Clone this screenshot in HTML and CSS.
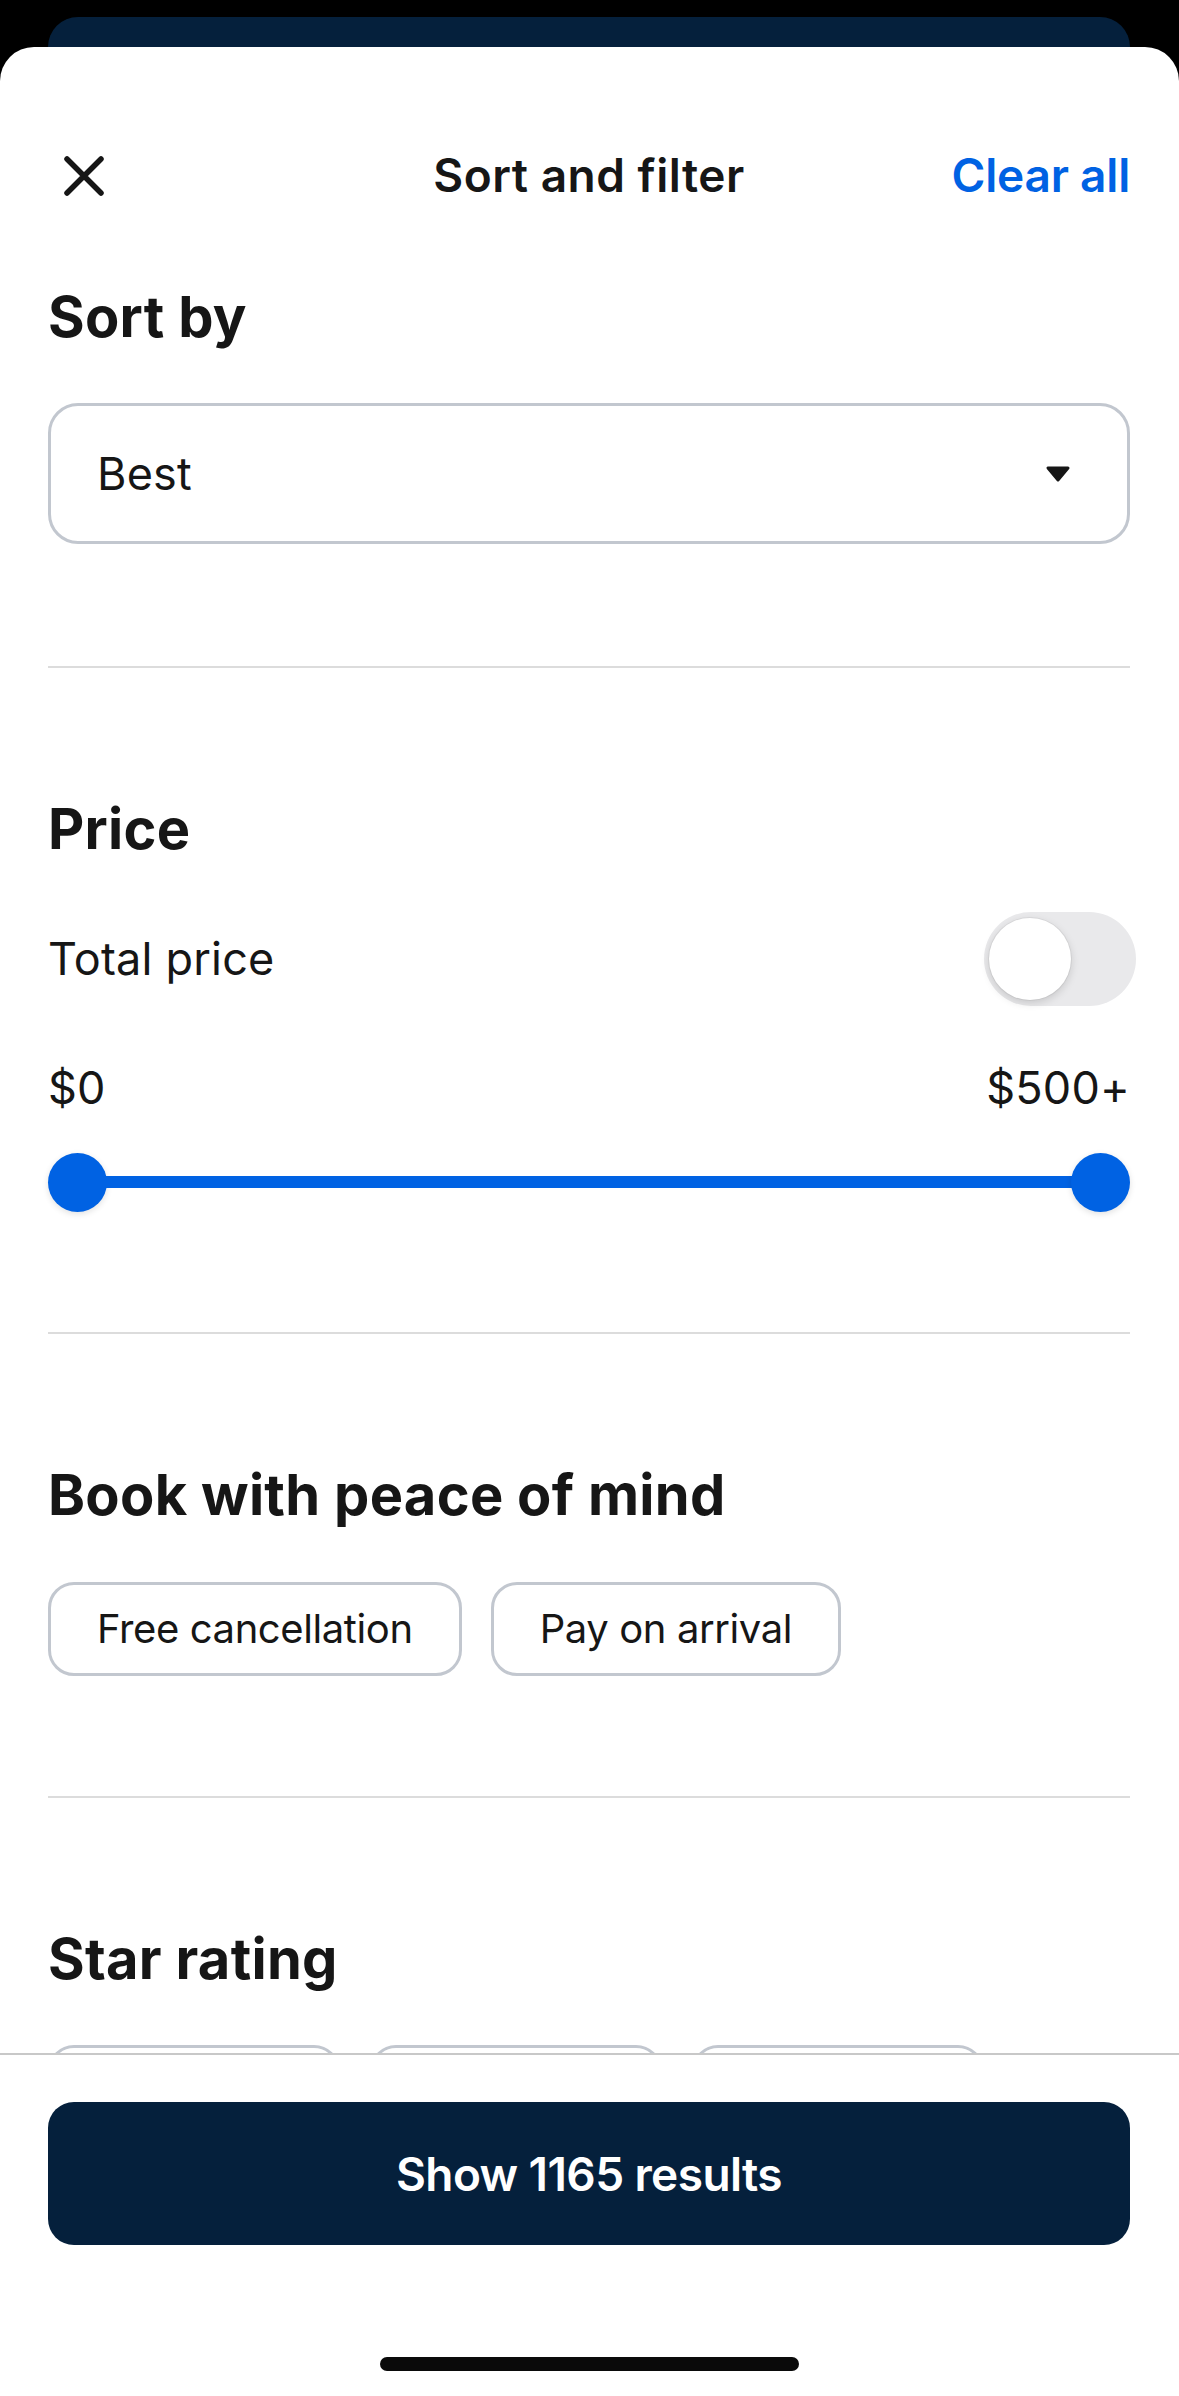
FILE: index.html
```html
<!DOCTYPE html>
<html lang="en">
<head>
<meta charset="utf-8">
<title>Sort and filter</title>
<link rel="stylesheet" href="styles.css">
</head>
<body>
<div class="behind"></div>
<div class="sheet">
  <div class="content">
    <header class="topbar">
      <button class="close" aria-label="Close">
        <svg width="42" height="42" viewBox="0 0 42 42"><path d="M4 4 L38 38 M38 4 L4 38" stroke="#161616" stroke-width="5.5" stroke-linecap="round" fill="none"/></svg>
      </button>
      <h1 class="title">Sort and filter</h1>
      <a class="clear">Clear all</a>
    </header>

    <section class="section first">
      <h2 class="heading">Sort by</h2>
      <div class="select">
        <span class="select-value">Best</span>
        <svg class="caret" width="26" height="18" viewBox="0 0 26 18"><path d="M3 3 H23 L13 15 Z" fill="#161616" stroke="#161616" stroke-width="3" stroke-linejoin="round"/></svg>
      </div>
    </section>

    <section class="section">
      <h2 class="heading">Price</h2>
      <div class="row toggle-row">
        <span class="body-text">Total price</span>
        <div class="switch"><div class="switch-knob"></div></div>
      </div>
      <div class="row range-labels">
        <span class="body-text">$0</span>
        <span class="body-text">$500+</span>
      </div>
      <div class="slider">
        <div class="knob"></div>
        <div class="track"></div>
        <div class="knob"></div>
      </div>
    </section>

    <section class="section">
      <h2 class="heading">Book with peace of mind</h2>
      <div class="chips">
        <span class="chip">Free cancellation</span>
        <span class="chip">Pay on arrival</span>
      </div>
    </section>

    <section class="section">
      <h2 class="heading">Star rating</h2>
      <div class="chips stars">
        <span class="chip star-chip"></span>
        <span class="chip star-chip"></span>
        <span class="chip star-chip"></span>
      </div>
    </section>
  </div>

  <footer class="footer">
    <button class="cta">Show 1165 results</button>
    <div class="home-indicator"></div>
  </footer>
</div>
</body>
</html>
```

FILE: styles.css
```css
* { box-sizing: border-box; }

html, body {
  margin: 0;
  padding: 0;
  background: #000;
  font-family: Inter, "Noto Sans", "Liberation Sans", sans-serif;
  color: #161616;
}

body {
  width: 1179px;
  height: 2396px;
  overflow: hidden;
  padding-top: 17px;
}

.behind {
  height: 30px;
  margin: 0 49px 0 48px;
  background: #05203c;
  border-radius: 30px 30px 0 0;
}

.sheet {
  height: 2349px;
  background: #fff;
  border-radius: 34px 34px 0 0;
  display: flex;
  flex-direction: column;
  overflow: hidden;
}

.content {
  flex: 1;
  overflow: hidden;
  padding: 0 49px 0 48px;
}

.topbar {
  margin-top: 79px;
  height: 100px;
  display: grid;
  grid-template-columns: 1fr auto 1fr;
  align-items: center;
}

.close {
  justify-self: start;
  border: 0;
  background: none;
  padding: 0;
  margin-left: 15px;
  width: 42px;
  height: 42px;
  display: flex;
}

.title {
  margin: 0;
  font-size: 46px;
  font-weight: 600;
  line-height: 1.2;
  letter-spacing: 0.5px;
}

.clear {
  justify-self: end;
  color: #0062e3;
  font-size: 46px;
  font-weight: 600;
  line-height: 1.2;
  letter-spacing: -0.2px;
}

.section {
  padding: 128px 0 120px;
  border-top: 2px solid #dcdcdc;
}

.section.first {
  border-top: 0;
  padding-top: 58px;
  padding-bottom: 122px;
}

.heading {
  margin: 0;
  font-size: 56px;
  font-weight: 700;
  line-height: 1.2;
  letter-spacing: 0.3px;
}

.body-text {
  font-size: 45px;
  font-weight: 400;
  line-height: 1.2;
  letter-spacing: 0.2px;
}

.select {
  margin-top: 52px;
  height: 141px;
  border: 3px solid #c2c7cf;
  border-radius: 30px;
  padding: 0 56px 0 46px;
  display: flex;
  align-items: center;
  justify-content: space-between;
}

.select-value {
  font-size: 45px;
  line-height: 1.2;
  letter-spacing: 0.2px;
}

.row {
  display: flex;
  align-items: center;
  justify-content: space-between;
}

.toggle-row {
  margin-top: 49px;
}

.switch {
  width: 152px;
  height: 94px;
  border-radius: 47px;
  background: #e9e9eb;
  display: flex;
  align-items: center;
  padding-left: 5px;
  margin-right: -6px;
}

.switch-knob {
  width: 82px;
  height: 82px;
  border-radius: 50%;
  background: #fff;
  box-shadow: 0 3px 8px rgba(0, 0, 0, 0.15), 0 0 0 1px rgba(0, 0, 0, 0.05);
}

.range-labels {
  margin-top: 55px;
}

.slider {
  margin-top: 37px;
  height: 60px;
  display: flex;
  align-items: center;
}

.knob {
  width: 59px;
  height: 59px;
  border-radius: 50%;
  background: #0062e3;
  box-shadow: 0 2px 6px rgba(0, 0, 0, 0.12);
  flex: none;
}

.track {
  flex: 1;
  height: 12px;
  background: #0062e3;
  margin: 0 -2px;
}

.chips {
  margin-top: 52px;
  display: flex;
  gap: 29px;
}

.chip {
  height: 94px;
  border: 3px solid #c2c7cf;
  border-radius: 26px;
  padding: 0 46px;
  display: flex;
  align-items: center;
  font-size: 40px;
  line-height: 1.2;
  letter-spacing: -0.4px;
}

.stars {
  gap: 30px;
}

.star-chip {
  flex: none;
  width: 292px;
}

.footer {
  height: 343px;
  border-top: 2px solid #c8c8c8;
  padding: 47px 49px 0 48px;
  background: #fff;
  display: flex;
  flex-direction: column;
  align-items: center;
}

.cta {
  width: 100%;
  height: 143px;
  border: 0;
  border-radius: 26px;
  background: #05203c;
  color: #fff;
  font-family: inherit;
  font-size: 46px;
  font-weight: 600;
  letter-spacing: -0.6px;
}

.home-indicator {
  margin-top: 112px;
  width: 419px;
  height: 14px;
  border-radius: 7px;
  background: #0a0a0a;
}
```
